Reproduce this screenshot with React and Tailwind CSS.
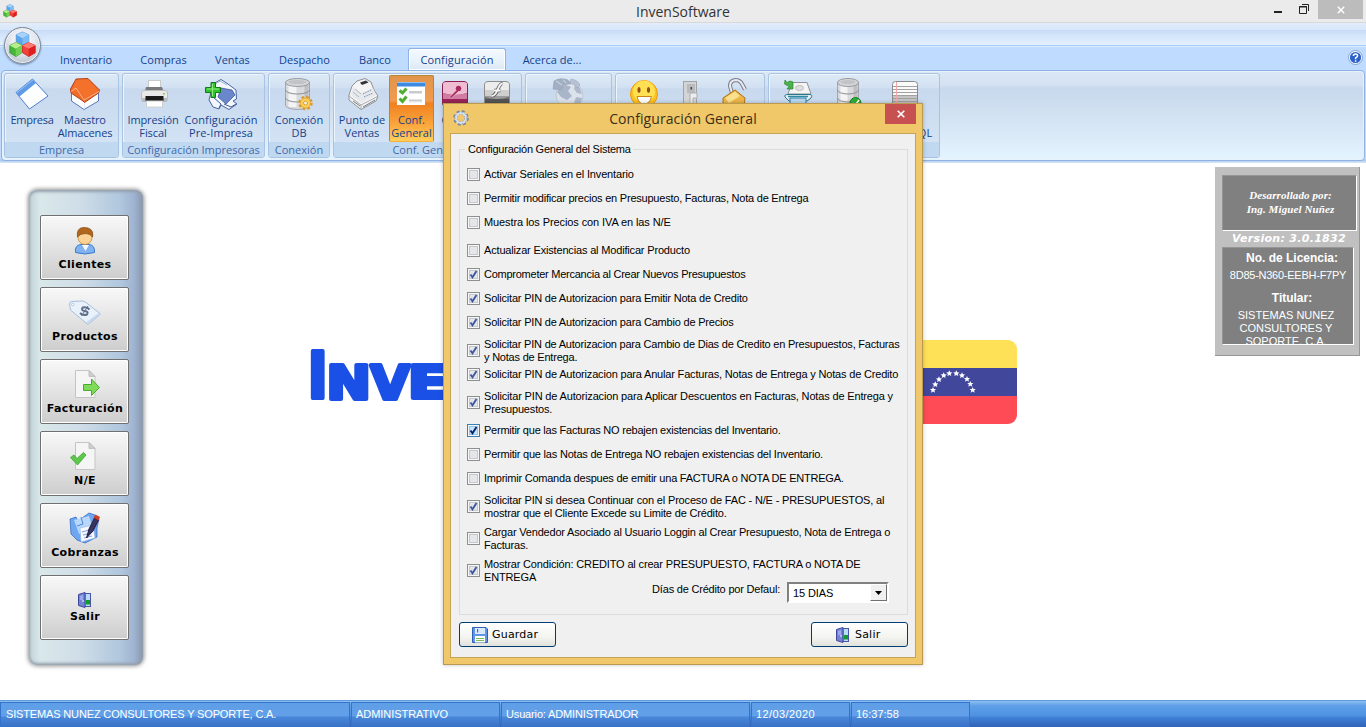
import React from "react";

const SANS = "font-['Liberation_Sans',Arial,sans-serif]";

/* ---------- ribbon icons ---------- */

function Icon({ x, w = 36, children }) {
  return (
    <svg width={w} height="34" viewBox={`${x} 77 ${w} 34`} className="block shrink-0">
      {children}
    </svg>
  );
}

const IcoEmpresa = () => (
  <Icon x={14}>
    <path d="M32.5 79 L48 96 L29.5 109 L16 92.5 Z" fill="#fdfeff" stroke="#4c7ed0" />
    <path d="M32.5 79 L36 83 L19.5 96.5 L16 92.5 Z" fill="#5f9ae8" />
    <path d="M33 79.8 L17 92.5" stroke="#9cc4f6" />
  </Icon>
);
const IcoMaestro = () => (
  <Icon x={67}>
    <path d="M71.5 93 L84 84 L98.500 92 V101 L84 109.500 L71.500 101 Z" fill="#fbfcff" stroke="#5a79b8" />
    <path d="M84.500 100 V109" stroke="#e3e8f4" />
    <path d="M70.500 89 L76 79 L88 78.500 L99.500 90 L98.500 93 L84.500 102.500 L83 101 L71 93 Z" fill="#f06c26" stroke="#b5401a" />
    <path d="M76 80 L88 79.500 L98 90.500 L84.500 98 L80 92 L72 91.500 Z" fill="#f4712c" />
    <path d="M71 91.500 L76 88 L84 100 L99 91.500" fill="none" stroke="#fbb28a" />
  </Icon>
);
const IcoPrinter = () => (
  <Icon x={135}>
    <rect x="148.500" y="80.500" width="12" height="9" fill="#fff" stroke="#c9c9c9" />
    <path d="M146 87 H162 L163.500 91 H145 Z" fill="#77797d" />
    <rect x="141.500" y="90.500" width="26" height="11" rx="2.500" fill="#e9e9e9" stroke="#bdbdbd" />
    <rect x="142" y="98" width="25" height="4" fill="#b9bbbd" />
    <rect x="145.500" y="96" width="18" height="5" fill="#1b1b1b" />
    <rect x="146.500" y="101" width="16" height="6" fill="#fff" stroke="#d0d0d0" />
    <rect x="163" y="93" width="2" height="1.500" fill="#8cc66a" />
  </Icon>
);
const IcoPreImpresa = () => (
  <Icon x={203}>
    <path d="M213 84 L221 79.500 L228 84 L236 90 L236.500 99 L233 101 L237 104 L229 109.500 L221 105 L219 109 L213 107 L209 100 Z" fill="#f3f6fd" stroke="#49659f" />
    <path d="M221 88 L232 90 L235 95 L226 104 L218 97 Z" fill="#6a86cd" stroke="#2f4d92" strokeWidth=".7" />
    <path d="M213 97 L221 104 L219 108 M224 104 L231 107 L236 104" fill="none" stroke="#3e5a98" />
    <path d="M214 85 L220 81 L227 85" fill="none" stroke="#9db3dc" />
    <path d="M211 82.500 H215.500 V87.500 H220.500 V92.500 H215.500 V97.500 H211 V92.500 H205.500 V87.500 H211 Z" fill="#35c22f" stroke="#14791a" />
    <path d="M212.500 84 V96 M207 89 H219" stroke="#8bf07a" />
  </Icon>
);
const Cylinder = ({ x, w }) => (
  <>
    <path d={`M${x} 82 V105 A${w / 2} 4.500 0 0 0 ${x + w} 105 V82`} fill="#d9dadd" stroke="#96989c" strokeWidth=".8" />
    <rect x={x + 3} y="84" width={w / 3} height="23" fill="#f6f6f7" opacity=".9" />
    <rect x={x + w - 5} y="84" width="4" height="21" fill="#b1b3b8" opacity=".7" />
    <path d={`M${x} 90 A${w / 2} 4 0 0 0 ${x + w} 90 M${x} 98 A${w / 2} 4 0 0 0 ${x + w} 98`} fill="none" stroke="#8e9095" />
    <ellipse cx={x + w / 2} cy="82.500" rx={w / 2} ry="4" fill="#d4d5d7" stroke="#8b8d91" strokeWidth=".8" />
    <ellipse cx={x + w / 2} cy="82" rx={w / 2 - 3} ry="2" fill="#c2c3c6" />
  </>
);
const IcoConexion = () => (
  <Icon x={281}>
    <Cylinder x={285.500} w={24} />
    <circle cx="305.500" cy="103" r="5.500" fill="#fcd667" stroke="#d7992a" strokeWidth="3.500" strokeDasharray="2.300 2.020" />
    <circle cx="305.500" cy="103" r="5" fill="#fbd15c" stroke="#dfa232" strokeWidth=".8" />
    <circle cx="305.500" cy="103" r="2" fill="#f4eee0" stroke="#d08f25" strokeWidth=".8" />
  </Icon>
);
const IcoPunto = () => (
  <Icon x={344}>
    <path d="M349 95 L352 86 L357 81 L365 78.500 L371 82 L374 90 L378 96 L376 101 L361 109.500 L349 100 Z" fill="#f4f4f5" stroke="#8f9196" />
    <path d="M349 96 L361 105 L377.500 96.500 M361 105 V109" fill="none" stroke="#a7a9ad" />
    <path d="M353 87 L361 93 L373 88 L376 95 L361 103 L351 95 Z" fill="#e6e8eb" />
    <path d="M360 82.500 L366 80.500 L368.500 82.500 L362 85 Z" fill="#31343b" />
    <path d="M355 89 L361 94 M353 92 L359 97" stroke="#b3b7bd" />
    <path d="M363 94 L371 90 M364 97 L373 93" stroke="#6f8db4" strokeDasharray="1.500 1" />
    <path d="M353 101 L360 106 M363 107 L375 100" stroke="#77797e" />
  </Icon>
);
const IcoGeneral = () => (
  <Icon x={393} w={37}>
    <rect x="397" y="82" width="28" height="23" fill="#fff" />
    <rect x="397" y="82" width="28" height="4.500" fill="#3d8ae0" />
    <path d="M397 82.500 H425" stroke="#8fbdf2" />
    <path d="M399.500 90.500 L402.500 93 L406.500 88.500 M399.500 98.500 L402.500 101.500 L406.500 96.500" fill="none" stroke="#4fae2f" strokeWidth="3" />
    <path d="M409 92 H422 M409 100.500 H422" stroke="#c9cacc" strokeWidth="2" />
    <path d="M409 93.500 H422 M409 102 H422" stroke="#e6e7e8" />
  </Icon>
);
const IcoAccess = () => (
  <Icon x={437}>
    <rect x="442.500" y="81.500" width="25" height="25" rx="3.500" fill="#b03468" stroke="#8b1f4e" />
    <path d="M443 84 Q443 82 446 82 H464 Q467 82 467 84 V93 Q455 97 443 93 Z" fill="#eebdd2" />
    <path d="M443 93 Q455 97 467 93 V99 H443 Z" fill="#d27ba3" />
    <circle cx="458.500" cy="88.500" r="3.300" fill="#a82a60" stroke="#f7dbe7" strokeWidth=".8" />
    <path d="M456.500 90 L449.500 97 L451 98.500 L459 91" fill="#a82a60" stroke="#f7dbe7" strokeWidth=".6" />
    <rect x="443" y="99" width="24" height="4" fill="#9a2457" />
  </Icon>
);
const IcoFlash = () => (
  <Icon x={479}>
    <rect x="484.500" y="81.500" width="25" height="25" rx="3.500" fill="#6d6d6d" stroke="#8d8d8d" />
    <path d="M485 84 Q485 82 488 82 H506 Q509 82 509 84 V96 H485 Z" fill="#ececec" />
    <path d="M485 90 H509 V97 Q497 101 485 97 Z" fill="#bcbcbc" opacity=".6" />
    <path d="M502.500 83.500 C497.500 83.500 498 96.500 491.500 96 M494 90.500 H500.500" fill="none" stroke="#666" strokeWidth="3.400" />
    <path d="M502.500 83.500 C497.500 83.500 498 96.500 491.500 96 M494 90.500 H500.500" fill="none" stroke="#f8f8f8" strokeWidth="1.800" />
    <rect x="485" y="99" width="24" height="5" fill="#555" />
  </Icon>
);
const IcoGlobe = () => (
  <Icon x={550}>
    <circle cx="569.500" cy="95" r="13.500" fill="#dbe2ec" stroke="#b3bdcd" strokeWidth=".7" />
    <path d="M560 87 L566 85 L571 87 L568 91 L572 96 L567 100 L561 97 L557 92 Z" fill="#a9b5c8" />
    <path d="M575 84 L580 88 L582 94 L577 93 L574 89 Z M576 97 L582 98 L580 105 L573 106 Z" fill="#aeb9cb" />
    <path d="M554 81 Q560 77 568 80 L571 84 Q563 83 561 90 L553 89 Z" fill="#a3afc3" stroke="#8f9bb0" strokeWidth=".5" />
    <path d="M571 79 Q578 80 580 85 L577 88 Q575 84 570 83 Z" fill="#b6c1d1" stroke="#98a4b9" strokeWidth=".5" />
    <path d="M556 81 L562 85 M563 79.500 L566 83" stroke="#d4dbe6" />
  </Icon>
);
const IcoSmile = () => (
  <Icon x={626}>
    <circle cx="644" cy="94" r="13.500" fill="#fdc21f" stroke="#eb9a12" />
    <circle cx="644" cy="91.500" r="11" fill="#fee052" />
    <ellipse cx="639" cy="90" rx="1.600" ry="2.900" fill="#93500f" />
    <ellipse cx="648.500" cy="90" rx="1.600" ry="2.900" fill="#93500f" />
    <path d="M637 96.500 H651.500 Q650 104 644 104 Q638.500 104 637 96.500 Z" fill="#fff" stroke="#cf8310" />
  </Icon>
);
const IcoSwitch = () => (
  <Icon x={672}>
    <rect x="683.500" y="81.500" width="13" height="25" fill="#d3d4d6" stroke="#a2a3a5" />
    <rect x="687" y="84" width="8" height="9" fill="#b9babd" />
    <path d="M690 93 H697 V98 H693 V104 H690 Z" fill="#eee" stroke="#adaeb0" />
    <rect x="690.500" y="87" width="1.600" height="2.500" fill="#4b4b4b" />
  </Icon>
);
const IcoLock = () => (
  <Icon x={718}>
    <path d="M732 93 L730 86 Q730 80.500 735.500 80 Q740 80 742 84 L745 89.500" fill="none" stroke="#7a7d88" strokeWidth="4" />
    <path d="M732 93 L730 86 Q730 80.500 735.500 80 Q740 80 742 84 L745 89.500" fill="none" stroke="#e9ebf2" strokeWidth="2" />
    <path d="M723 98 L735 90 L745 98 L744 106 L733 111 L723 104 Z" fill="#eeb547" stroke="#ad7012" />
    <path d="M725 98 L735 91.500 L740 96 L729 103 Z" fill="#fbe08e" />
  </Icon>
);
const IcoPrintDb = () => (
  <Icon x={780}>
    <path d="M792 82.500 H807 L811 94 H788 Z" fill="#f4f4f4" stroke="#8c9297" />
    <ellipse cx="799.500" cy="88" rx="4" ry="2.500" fill="#e0e0e0" stroke="#bbb" />
    <path d="M785 97 Q784 94.500 788 94.500 H810 Q813 95 811 98 L807 101 H789 Z" fill="#e7eff2" stroke="#27788c" />
    <path d="M788 96.500 H808" stroke="#2d8ba3" strokeWidth="1.500" />
    <rect x="790" y="98" width="16" height="9" fill="#b7d8ee" stroke="#377fa7" />
    <path d="M785 80 L787 82.500 L790 81 L793 82 V89 H787 L789 86.500 L784.500 84 Z" fill="#4bb14b" stroke="#2b8634" strokeWidth=".7" />
  </Icon>
);
const IcoDbOk = () => (
  <Icon x={831}>
    <Cylinder x={837.500} w={21} />
    <circle cx="855.500" cy="103" r="5.500" fill="#2fae36" stroke="#16801c" />
    <path d="M852.500 103 L855 105.500 L859 100" fill="none" stroke="#fff" strokeWidth="1.600" />
  </Icon>
);
const IcoNotes = () => (
  <Icon x={887}>
    <rect x="892.500" y="81.500" width="25" height="27" rx="3" fill="#fafafa" stroke="#8b8b8b" />
    <path d="M893 95 H917 V106 H893 Z" fill="#c4c4c4" />
    <path d="M893 86.500 H917 M893 89.500 H917 M893 92.500 H917 M893 95.500 H917 M893 98.500 H917 M893 101.500 H917" stroke="#a2a2a2" />
    <path d="M896.500 82 V108" stroke="#f3a7ac" />
  </Icon>
);

function Cubes({ size }) {
  return (
    <svg width={size} height={size} viewBox="0 0 28 28" className="block">
      <g strokeLinejoin="round">
        <path d="M14 1 L20.500 4 V11 L14 14.500 L7.500 11 V4 Z" fill="#5aa5ea" stroke="#4a8fd4" strokeWidth=".8" />
        <path d="M14 1 L20.500 4 L14 7.500 L7.500 4 Z" fill="#a6d2fb" />
        <path d="M14 7.500 L20.500 4 V11 L14 14.500 Z" fill="#7bbcf4" />
        <path d="M7 12 L13.500 15 V22.500 L7 26.500 L.8 22.500 V15 Z" fill="#48b43a" stroke="#2f9426" strokeWidth=".8" />
        <path d="M7 12 L13.500 15 L7 18.500 L.8 15 Z" fill="#b5ee8c" />
        <path d="M7 18.500 L13.500 15 V22.500 L7 26.500 Z" fill="#6fd053" />
        <path d="M20.500 12 L27.200 15 V22.500 L20.500 26.500 L14 22.500 V15 Z" fill="#f0423c" stroke="#cc2320" strokeWidth=".8" />
        <path d="M20.500 12 L27.200 15 L20.500 18.500 L14 15 Z" fill="#ff7a70" />
        <path d="M20.500 18.500 L27.200 15 V22.500 L20.500 26.500 Z" fill="#df1f1e" />
      </g>
    </svg>
  );
}

/* ---------- ribbon ---------- */

function Tool({ icon, lines = [], className, active }) {
  return (
    <div
      className={
        "flex h-[67px] shrink-0 flex-col items-center " +
        (active
          ? "rounded-[2px] border border-[#b98436] border-b-[#f8b03c] bg-[linear-gradient(180deg,#e0954a_0,#f29b50_38%,#ef8122_42%,#fba63c_75%,#ffcf5c_100%)] pt-[1px] "
          : "pt-[2px] ") +
        className
      }
    >
      {icon}
      <div className="mt-[2px] text-center text-[11px] leading-[13px] whitespace-nowrap text-[#15428b]">
        {lines.map((l) => (
          <div key={l} className="h-[13px]">{l}</div>
        ))}
      </div>
    </div>
  );
}

function Group({ className, label, children }) {
  return (
    <div
      className={
        "flex h-[85px] shrink-0 flex-col rounded-[3px] border border-[#a9c3e2] bg-[linear-gradient(180deg,#dde9f6_0,#d2e1f2_16%,#c8d9ee_18%,#d6e5f6_100%)] shadow-[inset_1px_1px_0_#ecf4fc] " +
        className
      }
    >
      <div className="flex h-[68px] pt-[1px]">{children}</div>
      <div className="h-[15px] rounded-b-[2px] bg-[#c1d8f1] text-center text-[11px] leading-[16px] whitespace-nowrap text-[#3e6aaa]">
        {label}
      </div>
    </div>
  );
}

function Ribbon() {
  return (
    <div className="h-[93px] bg-[linear-gradient(180deg,#bfdbff_0,#bfdbff_95%,#a9c6ea_97%,#dceafa_100%)] font-['Open_Sans','Noto_Sans',sans-serif]">
      <div className="mx-[1px] flex h-[91px] gap-[3px] rounded-[4px] border border-[#8db2e3] bg-[linear-gradient(180deg,#dbe7f5_0,#d4e1f2_16%,#c8d8ed_19%,#d5e5f4_60%,#e4f4ff_100%)] pt-[2px] pl-[2px] shadow-[inset_0_0_0_1px_#e6f1fc]">
        <Group className="w-[115px]" label="Empresa">
          <Tool className="w-[54px] tracking-[-0.3px]" icon={<IcoEmpresa />} lines={["Empresa"]} />
          <Tool className="w-[52px] tracking-[-0.1px]" icon={<IcoMaestro />} lines={["Maestro", "Almacenes"]} />
        </Group>
        <Group className="w-[143px]" label="Configuración Impresoras">
          <Tool className="ml-[4px] w-[52px] tracking-[-0.1px]" icon={<IcoPrinter />} lines={["Impresión", "Fiscal"]} />
          <Tool className="w-[84px] tracking-[0.12px]" icon={<IcoPreImpresa />} lines={["Configuración", "Pre-Impresa"]} />
        </Group>
        <Group className="w-[62px]" label="Conexión">
          <Tool className="w-[60px]" icon={<IcoConexion />} lines={["Conexión", "DB"]} />
        </Group>
        <Group className="w-[189px]" label="Conf. General">
          <Tool className="ml-[2px] w-[52px]" icon={<IcoPunto />} lines={["Punto de", "Ventas"]} />
          <Tool className="ml-[1px] w-[45px]" active icon={<IcoGeneral />} lines={["Conf.", "General"]} />
          <Tool className="w-[42px]" icon={<IcoAccess />} lines={["Conf."]} />
          <Tool className="w-[42px]" icon={<IcoFlash />} />
        </Group>
        <Group className="w-[87px]">
          <Tool className="ml-[1px] w-[82px]" icon={<IcoGlobe />} />
        </Group>
        <Group className="w-[150px]">
          <Tool className="ml-[6px] w-[44px]" icon={<IcoSmile />} />
          <Tool className="w-[48px]" icon={<IcoSwitch />} />
          <Tool className="w-[44px]" icon={<IcoLock />} />
        </Group>
        <Group className="w-[172px]">
          <Tool className="ml-[5px] w-[48px]" icon={<IcoPrintDb />} />
          <Tool className="w-[54px]" icon={<IcoDbOk />} />
          <Tool className="w-[58px] tracking-[0.25px]" icon={<IcoNotes />} lines={["", "Script SQL"]} />
        </Group>
      </div>
    </div>
  );
}

const TABS = [
  ["Inventario", "w-[72px]"],
  ["Compras", "w-[83px]"],
  ["Ventas", "w-[55px]"],
  ["Despacho", "w-[89px]"],
  ["Banco", "w-[52px]"],
  ["Configuración", "ml-[7px] w-[98px]"],
  ["Acerca de...", "w-[92px]"],
];

function TopBars() {
  return (
    <>
      <div className="flex h-[23px] items-center border-b border-[#d8d8d8] bg-[#ebebeb] font-['Open_Sans',sans-serif]">
        <div className="ml-[3px] w-[160px]">
          <Cubes size={14} />
        </div>
        <div className="ml-[373px] flex-1 pt-[1px] pl-[100px] text-[14px] leading-[22px] text-[#333]">InvenSoftware</div>
        <svg width="50" height="22" viewBox="1264 0 50 22">
          <path d="M1274 12 H1282" stroke="#222" strokeWidth="2" />
          <path d="M1299.500 6.500 H1306.500 V13.500 H1299.500 Z M1299 7 H1307" fill="none" stroke="#222" />
          <path d="M1302 4.500 H1308.500 V11" fill="none" stroke="#222" />
        </svg>
        <div className="mr-[3px] ml-[4px] flex h-[19px] w-[45px] items-center justify-center self-start bg-[#bcbcbc]">
          <svg width="8" height="8" viewBox="0 0 8 8">
            <path d="M.8 .8 L7.200 7.200 M7.200 .8 L.8 7.200" stroke="#fff" strokeWidth="1.500" />
          </svg>
        </div>
      </div>
      <div className="h-[23px] border-b border-[#a6cbf5] bg-[linear-gradient(180deg,#e2edfb_0,#d8e7fb_30%,#c9dcf6_34%,#d5e6fb_60%,#e2f0ff_100%)]" />
      <div className="flex h-[24px] items-end border-t border-[#dcebfe] bg-[#bfdbff] pl-[50px] font-['Open_Sans','Noto_Sans',sans-serif] text-[11px] leading-[23px] text-[#15428b]">
        {TABS.map(([t, w]) => (
          <div
            key={t}
            className={
              "text-center whitespace-nowrap " +
              w +
              (t === "Configuración"
                ? " relative h-[22px] rounded-t-[3px] border border-b-0 border-[#8db2e3] bg-[linear-gradient(180deg,#f4f9ff_0,#e8f1fb_60%,#dbe7f5_100%)] leading-[21px] tracking-[0.12px] shadow-[inset_0_0_0_1px_#fff]"
                : " h-[22px]")
            }
          >
            {t}
          </div>
        ))}
        <svg width="15" height="15" viewBox="0 0 15 15" className="mr-[3px] mb-[5px] ml-auto">
          <circle cx="7.500" cy="7.500" r="6.200" fill="#2c62c9" stroke="#f4f8ff" strokeWidth="1.200" />
          <circle cx="7.500" cy="7.500" r="7" fill="none" stroke="#6f8fc4" strokeWidth=".7" />
          <path d="M5.400 6 Q5.400 4 7.500 4 Q9.600 4 9.600 5.800 Q9.600 7 7.600 8 V9.200 M7.600 10.300 V11.800" fill="none" stroke="#fff" strokeWidth="1.500" />
        </svg>
      </div>
    </>
  );
}

/* ---------- side menu ---------- */

const IcoUser = () => (
  <svg width="32" height="32" viewBox="0 0 32 32">
    <path d="M6.500 28.500 Q5.500 21 12 20.500 H20 Q26 21 25.500 28.500 Q16 31.500 6.500 28.500 Z" fill="#7fb2ee" stroke="#3a7bcb" />
    <path d="M13 21 L16.500 27 L20 21 Z" fill="#f5f9ff" />
    <circle cx="16" cy="13.500" r="7" fill="#fcd394" stroke="#c98430" strokeWidth=".8" />
    <path d="M8.500 13 Q7 3.500 15 3.500 Q24 3.500 23.800 11 L23.500 13 Q21 9.500 16.500 9.500 Q11 9.500 8.500 13 Z" fill="#b0671c" stroke="#7d4610" strokeWidth=".7" />
  </svg>
);
const IcoTag = () => (
  <svg width="32" height="32" viewBox="0 0 32 32">
    <path d="M.5 8 Q.5 5.500 3 5.500 L13 5 Q15 5 17 6.500 L31.500 18 L19 28.500 L1.500 14 Z" fill="#e9f1fb" stroke="#a4bedd" />
    <path d="M18 27 L30 18" stroke="#c5d8ef" strokeWidth="2" />
    <circle cx="3.800" cy="8.500" r="1.300" fill="#fff" stroke="#9fb6d2" strokeWidth=".7" />
    <path d="M20.500 13.500 Q18 10.500 13.800 11.500 Q11.500 14 15.500 15 Q20 15.500 18 18.500 Q14 20 11 17" fill="none" stroke="#5f6f8e" strokeWidth="2" />
    <path d="M19 10 L12.500 20" stroke="#5f6f8e" />
  </svg>
);
const Page = () => (
  <>
    <path d="M6.500 2.500 H20 L26 8.500 V29.500 H6.500 Z" fill="#f5f5f5" stroke="#c4c4c4" />
    <path d="M20 2.500 V8.500 H26 Z" fill="#cdcdcd" stroke="#b5b5b5" strokeWidth=".7" />
  </>
);
const IcoBill = () => (
  <svg width="32" height="32" viewBox="0 0 32 32">
    <Page />
    <path d="M14.500 16.500 H22.500 V11 L30.500 19.500 L22.500 27.500 V22.500 H14.500 Z" fill="#7fd95b" stroke="#47ac2c" />
  </svg>
);
const IcoCheckPage = () => (
  <svg width="32" height="32" viewBox="0 0 32 32">
    <Page />
    <path d="M1.500 17.500 L5 15 L8 18.500 L14.500 12.500 L17 15 L8.500 25 Z" fill="#5fc84c" stroke="#3ba42c" strokeWidth=".8" />
  </svg>
);
const IcoNotesPen = () => (
  <svg width="32" height="32" viewBox="0 0 32 32">
    <path d="M1 7 L7 5 L9 9 L20 1 L26 3 L30 7 L28 16 L28 25 L16 31 L8 28 L2 22 Z" fill="#6ea6f0" stroke="#2d62c0" strokeWidth=".7" />
    <path d="M5 8 L20 4 L24 17 L10 22 Z" fill="#b9d6fb" />
    <path d="M12 5 L14 12 L8 14" fill="none" stroke="#4f86dd" />
    <path d="M11 16 L24 13 L26 26 L12 30 Z" fill="#f6f9ff" stroke="#94b5e8" strokeWidth=".6" />
    <path d="M13 20 L20 18 M14 23 L22 21 M15 26 L23 24" stroke="#7f9fd8" />
    <path d="M20 17 L25.500 6 L29.500 8 L24 19 L17.500 26 Z" fill="#39335f" stroke="#221d42" />
    <path d="M24.500 5.500 L26.500 2.500 L31 5 L29.500 8.500 Z" fill="#cf3f24" />
  </svg>
);
function Door() {
  return (
    <svg width="16" height="16" viewBox="0 0 16 16" className="block shrink-0">
      <rect x="8" y="1.500" width="5.500" height="13" fill="#b7dcf8" stroke="#4956a8" />
      <rect x="9" y="8" width="4" height="4.500" fill="#129a2c" />
      <path d="M1.500 2.500 L8 .5 V15.500 L1.500 13.500 Z" fill="#7483d6" stroke="#3e479b" />
      <path d="M3 4 L6 3 V8 L3 8 Z" fill="#9aa9ee" />
      <path d="M6 8 V10" stroke="#f4f4ff" />
    </svg>
  );
}

const MENU = [
  ["Clientes", <IcoUser />],
  ["Productos", <IcoTag />],
  ["Facturación", <IcoBill />],
  ["N/E", <IcoCheckPage />],
  ["Cobranzas", <IcoNotesPen />],
  ["Salir", <Door />],
];

function SideMenu() {
  return (
    <div className="mt-[27px] ml-[29px] flex h-[475px] w-[114px] shrink-0 flex-col items-center gap-[7px] rounded-[8px] bg-[linear-gradient(90deg,#c0d2d8_0,#d9e8ea_10%,#cfdde8_45%,#b0c7de_80%,#9fb4d1_92%,#8b97ad_100%)] pt-[25px] pr-[3px] shadow-[0_0_4px_1px_#8d8d8d,inset_0_2px_3px_#93a0ae,inset_0_-2px_3px_#93a0ae]">
      {MENU.map(([t, icon]) => (
        <div
          key={t}
          className="flex h-[65px] w-[89px] shrink-0 flex-col items-center justify-center rounded-[2px] border border-[#707070] bg-[linear-gradient(180deg,#f8f8f8_0,#ececec_30%,#cdcdcd_100%)] font-['DejaVu_Sans',Verdana,sans-serif] text-[11px] leading-[14px] font-bold text-black shadow-[inset_0_0_0_1px_#fff]"
        >
          {icon}
          <div className="mt-[2px] pl-[1px] tracking-[0.35px]">{t}</div>
        </div>
      ))}
    </div>
  );
}

/* ---------- centre: wordmark and flag ---------- */

function Wordmark() {
  return (
    <svg width="160" height="78" viewBox="305 336 160 78" className="mt-[173px] ml-[162px] block shrink-0">
      <g fill="#1b50e6" stroke="#1b50e6" strokeWidth="4" strokeLinejoin="round" fontFamily="'DejaVu Sans', sans-serif" fontWeight="700">
        <text transform="translate(307.500 397.500) scale(.86 1)" fontSize="64">I</text>
        <text transform="translate(326.500 398.500) scale(1.130 1)" fontSize="47">N</text>
        <text transform="translate(370.500 398.500) scale(1.080 1)" fontSize="47">V</text>
        <text transform="translate(408 397.500) scale(1.300 1)" fontSize="45">E</text>
      </g>
    </svg>
  );
}

const STARS = [
  [933, 390], [935.3, 384.3], [939, 379.3], [943.700, 375.300], [949.300, 373.300],
  [956.300, 373.300], [962, 375.300], [967, 379], [970.300, 384], [972.700, 390],
];

function Flag() {
  return (
    <svg width="127" height="84" viewBox="890 340 127 84" className="mt-[177px] ml-[425px] block shrink-0">
      <clipPath id="flag">
        <rect x="890" y="340" width="127" height="84" rx="9" />
      </clipPath>
      <g clipPath="url(#flag)">
        <rect x="890" y="340" width="127" height="28" fill="#ffe158" />
        <rect x="890" y="368" width="127" height="28" fill="#41479b" />
        <rect x="890" y="396" width="127" height="28" fill="#ff4b55" />
      </g>
      {STARS.map(([x, y]) => (
        <path
          key={x}
          transform={`translate(${x} ${y})`}
          d="M0 -3.100 L.9 -1 L3.100 -.9 L1.400 .6 L2 2.800 L0 1.600 L-2 2.800 L-1.400 .6 L-3.100 -.9 L-.9 -1 Z"
          fill="#fff"
        />
      ))}
    </svg>
  );
}

/* ---------- licence card ---------- */

function Licence() {
  return (
    <div className="mt-[4px] ml-[198px] h-[189px] w-[145px] shrink-0 border-r border-b border-[#969696] bg-[#c0c0c0] pt-[8px] pl-[7px] text-center text-white">
      <div className="h-[56px] w-[135px] border border-t-[#969696] border-r-white border-b-white border-l-[#969696] bg-[#808080] pt-[12px] pl-[2px] font-['Liberation_Serif','Times_New_Roman',serif] text-[11px] leading-[14px] font-bold tracking-[0.1px] italic">
        <div>Desarrollado por:</div>
        <div>Ing. Miguel Nuñez</div>
      </div>
      <div className="h-[16px] w-[134px] text-center font-['DejaVu_Sans',Verdana,sans-serif] text-[11px] leading-[15px] font-bold tracking-[0.3px] whitespace-nowrap italic">
        Version: 3.0.1832
      </div>
      <div className={"h-[98px] w-[132px] overflow-hidden border border-t-[#969696] border-r-white border-b-white border-l-[#969696] bg-[#808080] " + SANS}>
        <div className="mt-[3px] ml-[8px] text-[12px] leading-[14px] font-bold">No. de Licencia:</div>
        <div className="mt-[3px] text-[11px] leading-[14px] tracking-[-0.25px] whitespace-nowrap">8D85-N360-EEBH-F7PY</div>
        <div className="mt-[9px] ml-[8px] text-[12px] leading-[14px] font-bold">Titular:</div>
        <div className="mt-[4px] pr-[4px] text-[11px] leading-[13px]">
          <div>SISTEMAS NUNEZ</div>
          <div>CONSULTORES Y</div>
          <div>SOPORTE, C.A.</div>
        </div>
      </div>
    </div>
  );
}

/* ---------- dialog ---------- */

const OPTIONS = [
  { t: ["Activar Seriales en el Inventario"], k: "tracking-[-0.15px]" },
  { t: ["Permitir modificar precios en Presupuesto, Facturas, Nota de Entrega"], k: "tracking-[-0.22px]" },
  { t: ["Muestra los Precios con IVA en las N/E"], k: "tracking-[-0.1px]" },
  { t: ["Actualizar Existencias al Modificar Producto"], m: "mt-[4px]", k: "tracking-[-0.17px]" },
  { t: ["Comprometer Mercancia al Crear Nuevos Presupuestos"], on: 1, k: "tracking-[-0.25px]" },
  { t: ["Solicitar PIN de Autorizacion para Emitir Nota de Credito"], on: 1, k: "tracking-[-0.2px]" },
  { t: ["Solicitar PIN de Autorizacion para Cambio de Precios"], on: 1, k: "tracking-[-0.2px]" },
  { t: ["Solicitar PIN de Autorizacion para Cambio de Dias de Credito en Presupuestos, Facturas", "y Notas de Entrega."], on: 1, m: "mt-[4px]", k: "tracking-[-0.21px]" },
  { t: ["Solicitar PIN de Autorizacion para Anular Facturas, Notas de Entrega y Notas de Credito"], on: 1, k: "tracking-[-0.18px]" },
  { t: ["Solicitar PIN de Autorizacion para Aplicar Descuentos en Facturas, Notas de Entrega y", "Presupuestos."], on: 1, m: "mt-[4px]", k: "tracking-[-0.16px]" },
  { t: ["Permitir que las Facturas NO rebajen existencias del Inventario."], on: 2, m: "mt-[4px]", k: "tracking-[-0.23px]" },
  { t: ["Permitir que las Notas de Entrega NO rebajen existencias del Inventario."], k: "tracking-[-0.21px]" },
  { t: ["Imprimir Comanda despues de emitir una FACTURA o NOTA DE ENTREGA."], k: "tracking-[-0.23px]" },
  { t: ["Solicitar PIN si desea Continuar con el Proceso de FAC - N/E - PRESUPUESTOS, al", "mostrar que el Cliente Excede su Limite de Crédito."], on: 1, m: "mt-[4px]", k: "tracking-[-0.17px]" },
  { t: ["Cargar Vendedor Asociado al Usuario Loggin al Crear Presupuesto, Nota de Entrega o", "Facturas."], m: "mt-[8px]", k: "tracking-[-0.2px]" },
  { t: ["Mostrar Condición: CREDITO al crear PRESUPUESTO, FACTURA o NOTA DE", "ENTREGA"], on: 1, m: "mt-[8px]", k: "tracking-[-0.16px]" },
];

function Check({ on }) {
  const hot = on === 2;
  return (
    <svg width="13" height="13" viewBox="0 0 13 13" className="block shrink-0">
      <rect x=".5" y=".5" width="12" height="12" fill="#f6f6f6" stroke={hot ? "#3c7fb1" : "#8e8f8f"} />
      <rect x="2.500" y="2.500" width="8" height="8" fill={hot ? "#c4e6fb" : "#e4e6e9"} stroke={hot ? "#8ac8f0" : "#c6c9cc"} />
      {on && <path d="M3.500 6.500 L5.500 9.300 L9.500 3" fill="none" stroke={hot ? "#0a2170" : "#40599e"} strokeWidth="1.900" />}
    </svg>
  );
}

function DialogButton({ icon, label, className }) {
  return (
    <div className={"flex h-[25px] w-[97px] items-center gap-[4px] rounded-[3px] border border-[#003c74] bg-[linear-gradient(180deg,#ffffff_0,#f4f4f1_60%,#e2e2dc_100%)] font-['DejaVu_Sans',Verdana,sans-serif] text-[11px] tracking-[0.2px] text-black " + className}>
      {icon}
      <span className="pt-[1px]">{label}</span>
    </div>
  );
}

function Dialog() {
  return (
    <div className="absolute top-[103px] left-[443px] flex h-[562px] w-[480px] flex-col border border-[#b99a50] bg-[#f0c869] px-[6px] pb-[6px] shadow-[0_0_4px_rgba(0,0,0,.25)]">
      <div className="flex h-[29px] font-['Open_Sans',sans-serif]">
        <svg width="16" height="16" viewBox="0 0 16 16" className="mt-[6px] ml-[3px] shrink-0">
          <circle cx="8" cy="8" r="5.600" fill="none" stroke="#7d8696" strokeWidth="4.400" strokeDasharray="2.400 1.998" />
          <circle cx="8" cy="8" r="5" fill="none" stroke="#d6e2f3" strokeWidth="2.400" />
          <circle cx="8" cy="8" r="6" fill="none" stroke="#6c93c8" strokeWidth=".9" strokeDasharray="1.500 2" />
        </svg>
        <div className="ml-[24px] w-[380px] pt-[4px] text-center text-[14px] leading-[22px] tracking-[0.07px] text-[#3b2f18]">Configuración General</div>
        <div className="ml-auto flex h-[20px] w-[31px] items-center justify-center bg-[#c75050]">
          <svg width="8" height="8" viewBox="0 0 8 8">
            <path d="M.7 .7 L7.300 7.300 M7.300 .7 L.7 7.300" stroke="#fff" strokeWidth="1.600" />
          </svg>
        </div>
      </div>
      <div className={"flex flex-1 flex-col border border-[#c4a457] bg-[#f0f0f0] pt-[8px] pr-[7px] pl-[8px] text-[11px] text-black " + SANS}>
        <div className="flex h-[13px] items-center whitespace-nowrap">
          <div className="h-[6px] w-[6px] self-end border-t border-l border-[#dcdcdc]" />
          <div className="w-[168px] pt-[1px] pl-[3px] leading-[13px] tracking-[-0.24px]">Configuración General del Sistema</div>
          <div className="h-[6px] flex-1 self-end border-t border-r border-[#dcdcdc]" />
        </div>
        <div className="flex h-[460px] flex-col border border-t-0 border-[#dcdcdc] pt-[7px] pl-[7px]">
          {OPTIONS.map((o) => (
            <div key={o.t[0]} className={"flex h-[24px] shrink-0 items-center gap-[4px] " + (o.m || "")}>
              <Check on={o.on} />
              <div className={"leading-[13px] whitespace-nowrap " + o.k + (o.t.length > 1 ? " pt-[2px]" : "")}>
                {o.t.map((l) => (
                  <div key={l}>{l}</div>
                ))}
              </div>
            </div>
          ))}
          <div className="flex justify-end pr-[18px]">
            <div className="mr-[7px] leading-[15px] tracking-[-0.2px]">Días de Crédito por Defaul:</div>
            <div className="flex h-[21px] w-[102px] border-2 border-t-[#808080] border-r-white border-b-white border-l-[#808080] bg-white">
              <div className="flex-1 pl-[4px] leading-[18px] tracking-[-0.1px]">15 DIAS</div>
              <div className="flex h-[17px] w-[17px] items-center justify-center border border-t-[#fff] border-r-[#707070] border-b-[#707070] border-l-[#fff] bg-[#f0f0f0]">
                <svg width="7" height="4" viewBox="0 0 7 4">
                  <path d="M0 0 H7 L3.500 4 Z" fill="#000" />
                </svg>
              </div>
            </div>
          </div>
        </div>
        <div className="mt-[7px] flex justify-between">
          <DialogButton
            label="Guardar"
            className="pl-[12px]"
            icon={
              <svg width="16" height="16" viewBox="0 0 16 16" className="block shrink-0">
                <path d="M.5 .5 H14 L15.500 2 V15.500 H.5 Z" fill="#5f97e6" stroke="#2f5fb4" />
                <rect x="3" y="1" width="10" height="6" fill="#dbe9fb" />
                <rect x="5" y="2" width="1.200" height="3.500" fill="#3d6cc0" />
                <rect x="3" y="9" width="10" height="6.500" fill="#fff" />
                <path d="M4 11.500 H12 M4 13.500 H12" stroke="#7dbb4e" />
              </svg>
            }
          />
          <DialogButton label="Salir" className="pl-[23px]" icon={<Door />} />
        </div>
      </div>
    </div>
  );
}

/* ---------- status bar ---------- */

const STATUS = [
  ["SISTEMAS NUNEZ CONSULTORES Y SOPORTE, C.A.", "w-[350px] pl-[5px] tracking-[-0.15px]"],
  ["ADMINISTRATIVO", "w-[149px] pl-[4px] tracking-[-0.05px]"],
  ["Usuario: ADMINISTRADOR", "w-[249px] pl-[4px] tracking-[-0.15px]"],
  ["12/03/2020", "w-[99px] pl-[4px] tracking-[0.4px]"],
  ["16:37:58", "w-[119px] pl-[4px]"],
];

export default function App() {
  return (
    <div className="relative flex h-[727px] w-[1366px] flex-col overflow-hidden bg-white">
      <TopBars />
      <Ribbon />
      <div className="absolute top-[27px] left-[4px] flex h-[37px] w-[37px] items-center justify-center rounded-full border border-[#7d8794] bg-[radial-gradient(circle_at_50%_35%,#ffffff_0,#e3e7ee_45%,#bcc4d0_80%,#dfe4ec_100%)] pb-[2px] shadow-[0_1px_2px_rgba(60,80,120,.6),inset_0_0_0_1px_#eef2f7]">
        <Cubes size={27} />
      </div>
      <div className="flex flex-1 items-start">
        <SideMenu />
        <Wordmark />
        <Flag />
        <Licence />
      </div>
      <div className={"flex h-[27px] gap-[1px] border-t border-[#5f9ae0] bg-[linear-gradient(180deg,#8fc0f0_0,#5f9fe8_18%,#4f93e2_55%,#3f7fd4_65%,#2f63b8_100%)] pt-[1px] text-[11px] leading-[22px] text-white " + SANS}>
        {STATUS.map(([t, c]) => (
          <div key={t} className={"h-[25px] shrink-0 border border-[#3473cc] bg-[linear-gradient(180deg,#5f9fe8_0,#629fe8_55%,#4886d8_62%,#3a73c8_100%)] whitespace-nowrap " + c}>
            {t}
          </div>
        ))}
      </div>
      <Dialog />
    </div>
  );
}
